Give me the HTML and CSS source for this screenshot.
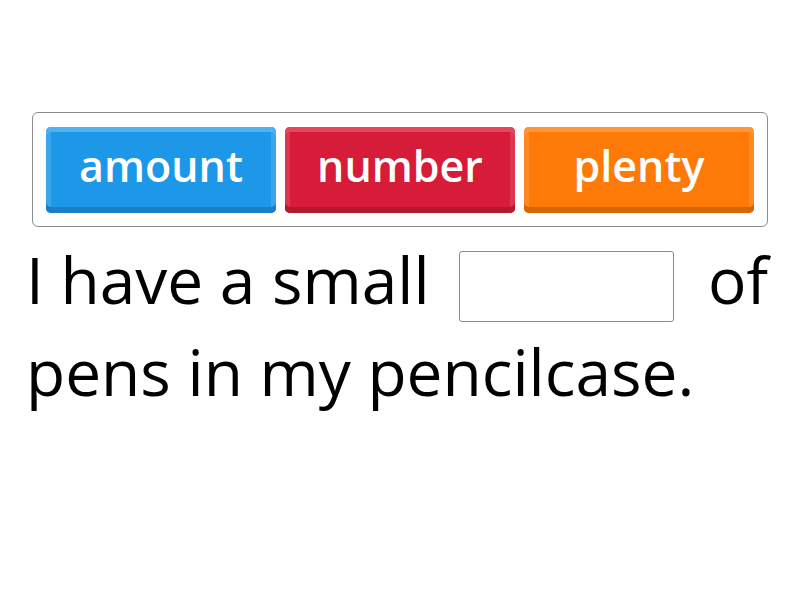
FILE: index.html
```html
<!DOCTYPE html>
<html>
<head>
<meta charset="utf-8">
<link rel="stylesheet" href="styles.css">
</head>
<body>
<div class="page">
  <div class="bank">
    <div class="tile blue">amount</div>
    <div class="tile red">number</div>
    <div class="tile orange">plenty</div>
  </div>
  <p class="sentence">I have a small <span class="blank"></span> of pens in my pencilcase.</p>
</div>
</body>
</html>
```
FILE: styles.css
```css
html, body {
  margin: 0;
  padding: 0;
  background: #fff;
}
.page {
  width: 800px;
  height: 600px;
  padding: 112px 20px 0 26px;
  box-sizing: border-box;
  font-family: "Open Sans", sans-serif;
}
.bank {
  margin-left: 6px;
  width: 736px;
  height: 115px;
  box-sizing: border-box;
  border: 1px solid #8c8c8c;
  border-radius: 6px;
  padding: 14px 13px;
  display: flex;
  gap: 9px;
}
.tile {
  width: 230px;
  height: 86px;
  box-sizing: border-box;
  border-radius: 5px;
  display: flex;
  align-items: center;
  justify-content: center;
  color: #fff;
  font-weight: 600;
  font-size: 43px;
  padding-bottom: 9px;
}
.blue {
  background: #1d97e8;
  box-shadow: inset 0 5px 0 #52b2f0, inset 0 -6px 0 #1a7fc8, inset 5px 0 0 #3aa6ec, inset -5px 0 0 #3aa6ec;
}
.red {
  background: #d61c38;
  box-shadow: inset 0 5px 0 #e4485e, inset 0 -6px 0 #b5172e, inset 5px 0 0 #dd3450, inset -5px 0 0 #dd3450;
}
.orange {
  background: #fd7a09;
  box-shadow: inset 0 5px 0 #fe9639, inset 0 -6px 0 #d86405, inset 5px 0 0 #fe8a22, inset -5px 0 0 #fe8a22;
}
.sentence {
  margin: 7px 0 0 0;
  width: 754px;
  font-size: 64px;
  line-height: 92px;
  color: #000;
  text-align: left;
}
.blank {
  display: inline-block;
  width: 215px;
  height: 71px;
  box-sizing: border-box;
  border: 1px solid #8a8a8a;
  border-radius: 3px;
  vertical-align: middle;
  margin: 0 17px 0 13px;
}
```
